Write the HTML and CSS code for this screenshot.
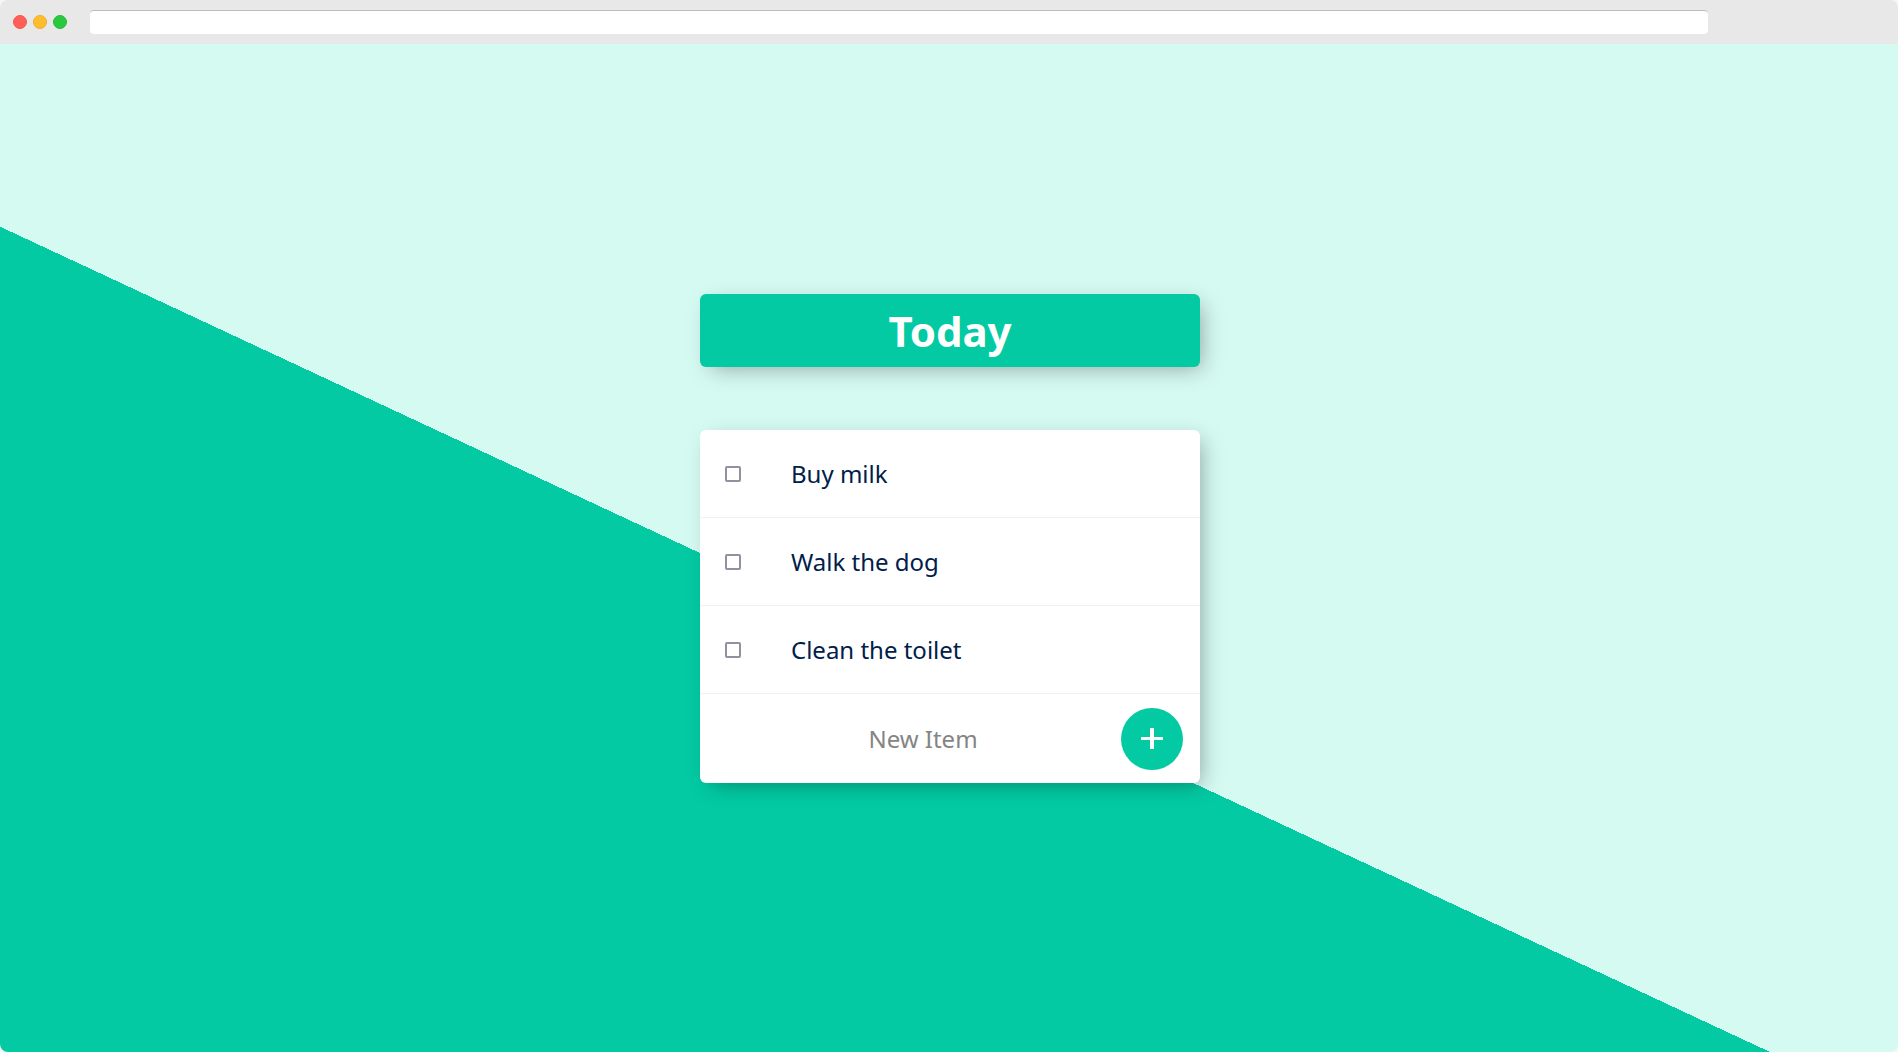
FILE: index.html
```html
<!DOCTYPE html>
<html lang="en">
<head>
<meta charset="utf-8">
<title>Today</title>
<link rel="stylesheet" href="styles.css">
</head>
<body>
<div class="window">
  <header class="toolbar">
    <div class="lights">
      <span class="light light-close"></span>
      <span class="light light-minimize"></span>
      <span class="light light-zoom"></span>
    </div>
    <input class="address" type="text" aria-label="Address">
  </header>
  <main class="page">
    <div class="box heading">
      <h1>Today</h1>
    </div>
    <div class="box list">
      <div class="item">
        <input type="checkbox" id="milk">
        <label for="milk">Buy milk</label>
      </div>
      <div class="item">
        <input type="checkbox" id="dog">
        <label for="dog">Walk the dog</label>
      </div>
      <div class="item">
        <input type="checkbox" id="toilet">
        <label for="toilet">Clean the toilet</label>
      </div>
      <form class="item new-item">
        <input type="text" class="new-text" placeholder="New Item" aria-label="New Item" autocomplete="off">
        <button type="button" class="add" aria-label="Add item">
          <svg width="22" height="22" viewBox="0 0 22 22" aria-hidden="true"><path d="M9 0h4v21H9zM0 9h22v3H0z" fill="#fff"/></svg>
        </button>
      </form>
    </div>
  </main>
</div>
</body>
</html>
```
FILE: styles.css
```css
* {
  box-sizing: border-box;
}

body {
  margin: 0;
  background: #f6f6f6;
  font-family: "Noto Sans", sans-serif;
}

.window {
  display: flex;
  flex-direction: column;
  min-height: 100vh;
  border-radius: 8px;
  overflow: hidden;
}

.toolbar {
  display: flex;
  align-items: center;
  gap: 23px;
  height: 44px;
  padding: 0 190px 0 13px;
  background: #e8e8e8;
}

.lights {
  display: flex;
  gap: 6px;
}

.light {
  width: 14px;
  height: 14px;
  border: 1px solid;
  border-radius: 50%;
}

.light-close {
  background: #ff5f57;
  border-color: #f15850;
}

.light-minimize {
  background: #ffbd2e;
  border-color: #eeac30;
}

.light-zoom {
  background: #28c940;
  border-color: #27b83c;
}

.address {
  flex: 1;
  height: 24px;
  padding: 0 8px;
  border: 0;
  border-top: 1px solid #bcbcbc;
  border-radius: 4px;
  background: #fff;
}

.page {
  flex: 1;
  padding: 250px 20px 60px 22px;
  background: linear-gradient(25deg, #03caa3 43.6%, #d5faf1 43.6%);
}

.box {
  max-width: 500px;
  margin: 0 auto;
  border-radius: 6px;
  background: #fff;
  box-shadow: 6px 6px 22px -5px rgba(0, 0, 0, 0.34);
}

.heading {
  margin-bottom: 63px;
  padding: 8px;
  background: #03caa3;
  text-align: center;
}

h1 {
  margin: 0;
  color: #fff;
  font-size: 42px;
  line-height: 57px;
}

.item {
  display: flex;
  align-items: center;
  min-height: 88px;
  padding: 0 25px;
  border-bottom: 1px solid #f1f1f1;
}

.item input[type="checkbox"] {
  appearance: none;
  width: 16px;
  height: 16px;
  margin: 0 50px 0 0;
  border: 2px solid #928fa0;
  border-radius: 2px;
}

label {
  color: #00204a;
  font-size: 24px;
}

.new-item {
  min-height: 89px;
  padding-right: 17px;
  border-bottom: 0;
}

.new-text {
  flex: 1;
  min-width: 0;
  height: 60px;
  padding: 0;
  border: 0;
  background: transparent;
  color: #00204a;
  font: 24px "Noto Sans", sans-serif;
  text-align: center;
}

.new-text::placeholder {
  color: #858585;
}

.add {
  display: grid;
  place-items: center;
  width: 62px;
  height: 62px;
  padding: 0;
  border: 0;
  border-radius: 50%;
  background: #03caa3;
}
```
